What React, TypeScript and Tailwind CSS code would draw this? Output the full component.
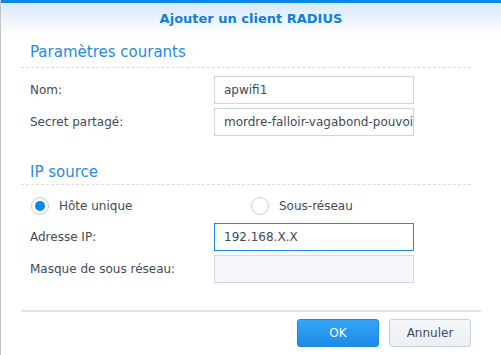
import React from "react";

function Radio({ checked, label }: { checked: boolean; label: string }) {
  return (
    <div className="flex items-center w-[220px] h-[28px]">
      <span className="w-[18px] h-[18px] rounded-full border border-[#c6ced6] bg-white flex items-center justify-center">
        {checked && <span className="w-[10px] h-[10px] rounded-full bg-[#0a86e6]" />}
      </span>
      <span className="ml-[10px] text-[12px] text-[#414b55]">{label}</span>
    </div>
  );
}

function Row({
  label,
  value,
  focused,
  disabled,
}: {
  label: string;
  value?: string;
  focused?: boolean;
  disabled?: boolean;
}) {
  return (
    <div className="flex items-center h-[28px]">
      <div className="w-[193px] pl-[9px] text-[12px] text-[#414b55]">{label}</div>
      <div
        className={
          "w-[200px] h-[28px] flex items-center px-[9px] overflow-hidden whitespace-nowrap text-[12px] text-[#414b55] border " +
          (focused
            ? "border-[#1b8ae6] bg-white"
            : disabled
            ? "border-[#cfd8e1] bg-[#f4f6f9]"
            : "border-[#cbd5df] bg-white")
        }
      >
        {value}
      </div>
    </div>
  );
}

export default function App() {
  return (
    <div
      className="w-[501px] h-[355px] bg-white border-l border-[#c4c4c4] overflow-hidden flex flex-col"
      style={{ fontFamily: "'DejaVu Sans', Verdana, sans-serif" }}
    >
      <div className="h-[3px] bg-[#0a86e6]" />
      <div className="h-[32px] bg-gradient-to-b from-[#d8e9fa] to-white flex items-center justify-center">
        <span className="text-[13px] font-bold text-[#117fd8]">Ajouter un client RADIUS</span>
      </div>
      <div className="pl-[20px] pr-[19px] flex flex-col">
        <div className="w-[450px] pt-[7px] pb-[5px] pl-[9px] text-[15px] leading-[20px] text-[#1f8aea] border-b border-dashed border-[#d7dde3]">
          Paramètres courants
        </div>
        <div className="mt-[8px] flex flex-col gap-[4px]">
          <Row label="Nom:" value="apwifi1" />
          <Row label="Secret partagé:" value="mordre-falloir-vagabond-pouvoir" />
        </div>
        <div className="w-[450px] mt-[26px] pb-[2px] pl-[9px] text-[15px] leading-[20px] text-[#1f8aea] border-b border-dashed border-[#d7dde3]">
          IP source
        </div>
        <div className="mt-[7px] flex pl-[10px]">
          <Radio checked label="Hôte unique" />
          <Radio checked={false} label="Sous-réseau" />
        </div>
        <div className="mt-[3px] flex flex-col gap-[4px]">
          <Row label="Adresse IP:" value="192.168.X.X" focused />
          <Row label="Masque de sous réseau:" disabled />
        </div>
        <div className="mt-[27px] w-[460px] border-t-2 border-[#e3e6e9]" />
        <div className="mt-[7px] w-[450px] flex justify-end gap-[10px]">
          <button className="w-[82px] h-[28px] rounded-[3px] border border-[#1a86dd] bg-gradient-to-b from-[#34a5f7] to-[#1a8be8] text-white text-[12px]">
            OK
          </button>
          <button className="w-[82px] h-[28px] rounded-[3px] border border-[#c6d1dc] bg-gradient-to-b from-[#f6f8fa] to-[#eaeff4] text-[#414b55] text-[12px]">
            Annuler
          </button>
        </div>
      </div>
    </div>
  );
}
